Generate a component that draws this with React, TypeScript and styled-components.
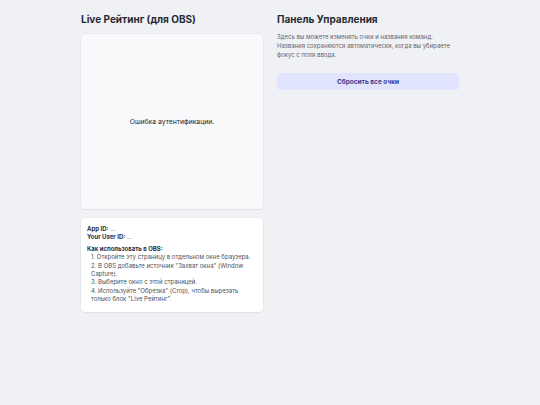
import React from 'react';
import styled, { createGlobalStyle } from 'styled-components';

const GlobalStyle = createGlobalStyle`
  html, body {
    margin: 0;
    padding: 0;
    background: #f0f1f5;
  }
  body {
    font-family: Inter, "Noto Sans", "Liberation Sans", sans-serif;
    color: #1f2430;
  }
`;

const Page = styled.div`
  min-height: 405px;
  padding-top: 12px;
  box-sizing: border-box;
`;

const Layout = styled.div`
  width: 378px;
  margin: 0 auto;
  display: grid;
  grid-template-columns: 1fr 1fr;
  gap: 14px;
  align-items: start;
`;

const Column = styled.section`
  display: flex;
  flex-direction: column;
`;

const Title = styled.h2`
  margin: 0 0 8px;
  font-size: 10px;
  line-height: 14px;
  font-weight: 700;
  color: #262a33;
`;

const Card = styled.div<{ tone?: 'muted' | 'white' }>`
  background: ${(p) => (p.tone === 'muted' ? '#f8f9fb' : '#ffffff')};
  border-radius: 4px;
  box-shadow: 0 0 0 0.5px rgba(0, 0, 0, 0.06), 0 1px 2px rgba(0, 0, 0, 0.04);
`;

const Preview = styled(Card)`
  height: 175px;
  display: flex;
  align-items: center;
  justify-content: center;
  font-size: 6.8px;
  color: #1f2430;
`;

const Info = styled(Card)`
  margin-top: 9px;
  padding: 7px 6px 8px;
  font-size: 6px;
  line-height: 8.4px;
  color: #4b5160;
`;

const Line = styled.div`
  b {
    font-weight: 700;
    color: #2b303a;
  }
`;

const HowTo = styled.div`
  margin-top: 3px;
  font-weight: 700;
  color: #2b303a;
`;

const Steps = styled.ol`
  margin: 0;
  padding: 0 0 0 4px;
  list-style: none;
`;

const Step = styled.li`
  margin: 0;
`;

const Description = styled.p`
  margin: -2px 0 0;
  font-size: 6px;
  line-height: 9px;
  color: #5f6573;
`;

const ResetButton = styled.button`
  margin-top: 14px;
  height: 17px;
  border: none;
  border-radius: 4px;
  background: #e1e4fd;
  color: #3f3a94;
  font-family: inherit;
  font-size: 6.5px;
  font-weight: 700;
  cursor: pointer;
`;

const steps = [
  '1. Откройте эту страницу в отдельном окне браузера.',
  '2. В OBS добавьте источник "Захват окна" (Window Capture).',
  '3. Выберите окно с этой страницей.',
  '4. Используйте "Обрезка" (Crop), чтобы вырезать только блок "Live Рейтинг".',
];

export default function App() {
  return (
    <>
      <GlobalStyle />
      <Page>
        <Layout>
          <Column>
            <Title>Live Рейтинг (для OBS)</Title>
            <Preview tone="muted">Ошибка аутентификации.</Preview>
            <Info>
              <Line><b>App ID:</b> ...</Line>
              <Line><b>Your User ID:</b> ...</Line>
              <HowTo>Как использовать в OBS:</HowTo>
              <Steps>
                {steps.map((s) => (
                  <Step key={s}>{s}</Step>
                ))}
              </Steps>
            </Info>
          </Column>
          <Column>
            <Title>Панель Управления</Title>
            <Description>
              Здесь вы можете изменять очки и названия команд. Названия сохраняются
              автоматически, когда вы убираете фокус с поля ввода.
            </Description>
            <ResetButton>Сбросить все очки</ResetButton>
          </Column>
        </Layout>
      </Page>
    </>
  );
}
